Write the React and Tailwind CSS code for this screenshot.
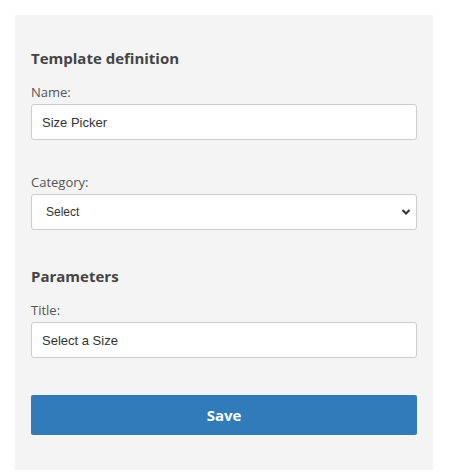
import { useState } from "react";

const Label = ({ children }) => (
  <label className="block text-[13px] leading-[18px] text-[#555] mb-[3px]">{children}</label>
);

const App = () => {
  const [name, setName] = useState("Size Picker");
  const [title, setTitle] = useState("Select a Size");
  const [category, setCategory] = useState("");

  return (
    <div className="min-h-screen bg-white pt-[15px] pl-[15px] font-['Open_Sans',sans-serif]">
      <div className="w-[418px] bg-[#f4f4f4] px-4 pt-[33px] pb-[35px]">
        <h3 className="text-[15px] leading-5 font-bold text-[#444] mb-[15px]">Template definition</h3>
        <Label>Name:</Label>
        <input
          value={name}
          onChange={(e) => setName(e.target.value)}
          className="block w-full h-9 bg-white border border-[#ccc] rounded-[3px] px-[10px] text-[13px] text-[#333] font-['Liberation_Sans',Arial,sans-serif] outline-none"
        />

        <div className="mt-[33px]">
          <Label>Category:</Label>
          <div className="relative">
            <select
              value={category}
              onChange={(e) => setCategory(e.target.value)}
              className="block w-full h-9 appearance-none bg-white border border-[#ccc] rounded-[3px] pl-[14px] pr-8 text-[12px] text-[#333] font-['Liberation_Sans',Arial,sans-serif] outline-none"
            >
              <option value="">Select</option>
              <option value="apparel">Apparel</option>
              <option value="shoes">Shoes</option>
            </select>
            <svg
              className="pointer-events-none absolute right-[6px] top-1/2 -translate-y-1/2"
              width="10"
              height="7"
              viewBox="0 0 10 7"
            >
              <path d="M1.5 1.5 L5 5 L8.5 1.5" fill="none" stroke="#333" strokeWidth="2" />
            </svg>
          </div>
        </div>

        <h3 className="mt-[36px] text-[15px] leading-5 font-bold text-[#444] mb-[15px]">Parameters</h3>
        <Label>Title:</Label>
        <input
          value={title}
          onChange={(e) => setTitle(e.target.value)}
          className="block w-full h-9 bg-white border border-[#ccc] rounded-[3px] px-[10px] text-[13px] text-[#333] font-['Liberation_Sans',Arial,sans-serif] outline-none"
        />

        <button className="mt-[37px] w-full h-10 bg-[#317bbb] rounded-[2px] text-white text-[15px] font-bold">
          Save
        </button>
      </div>
    </div>
  );
};

export default App;
